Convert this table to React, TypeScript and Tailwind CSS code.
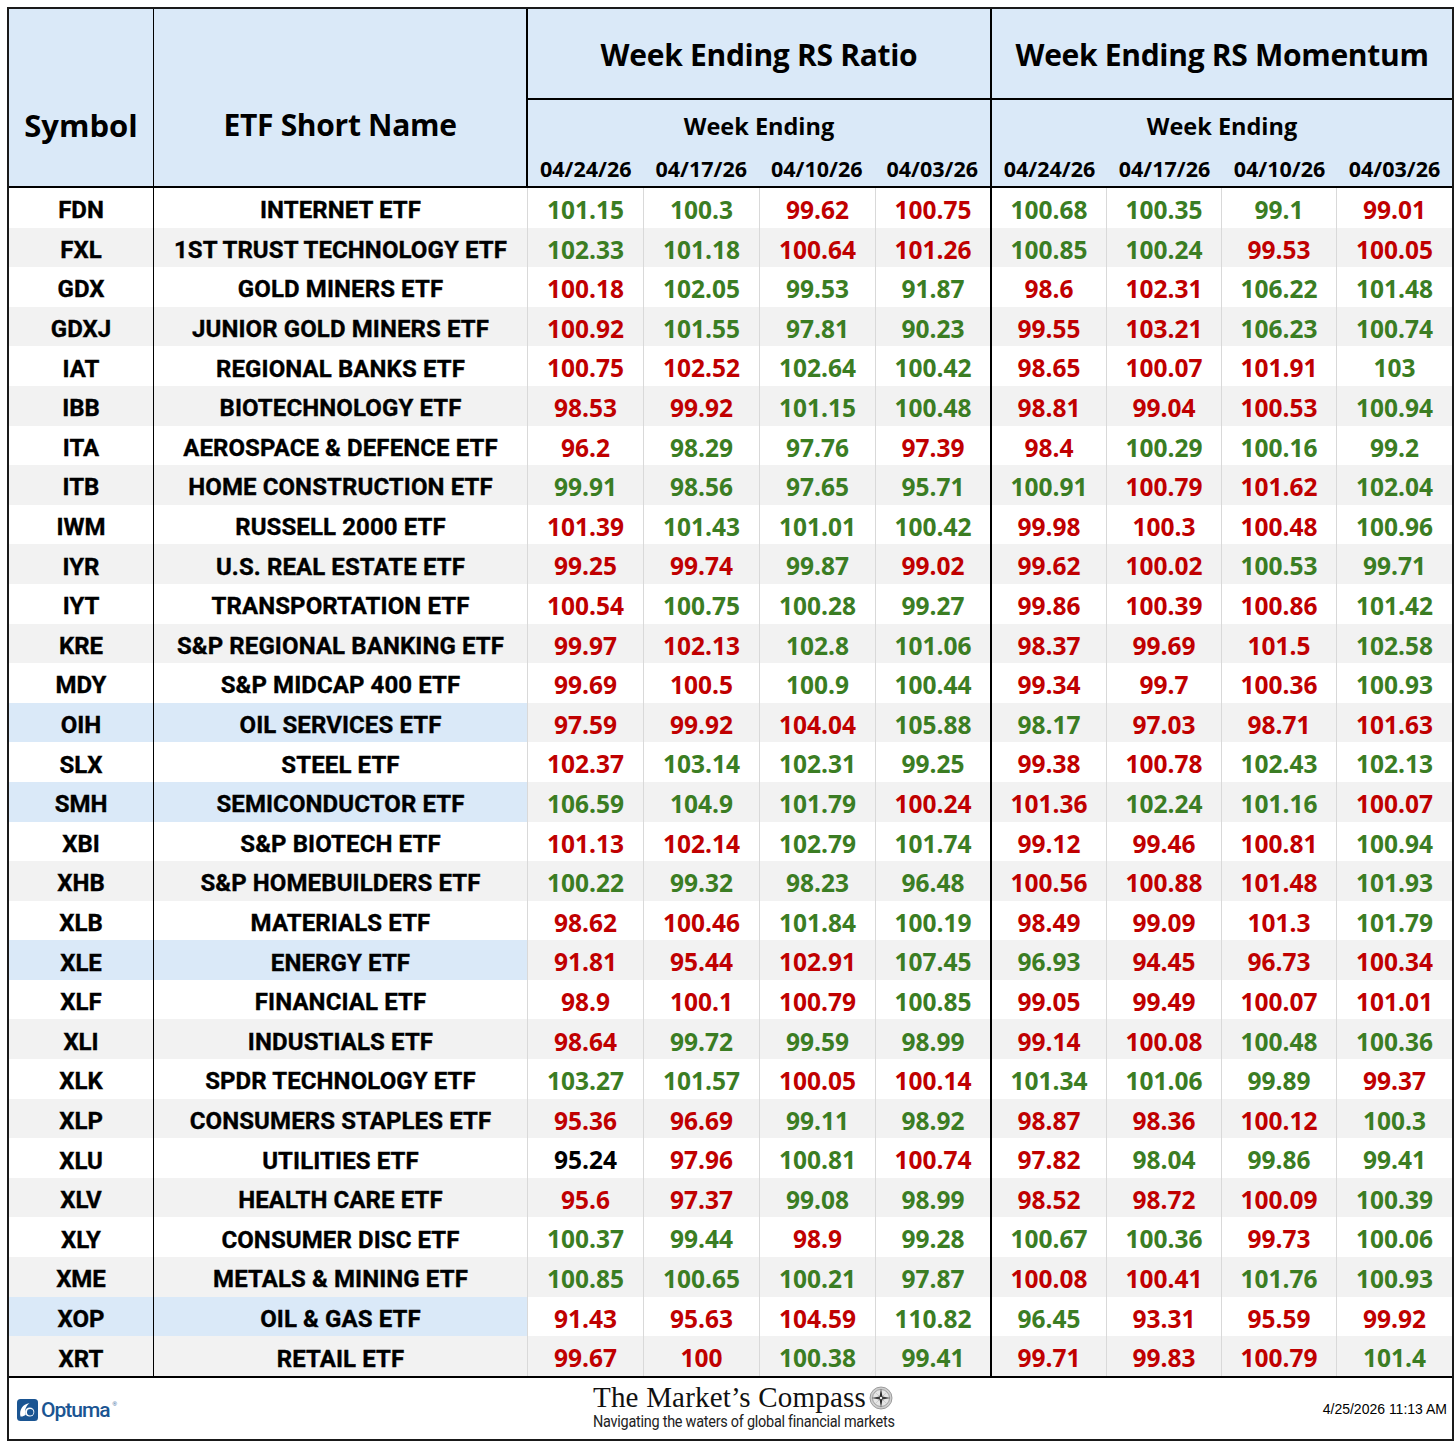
import React from "react";

type Row = [string, string, string, boolean];

const RAW: Row[] = [
  ["FDN", "INTERNET ETF", "101.15G 100.3G 99.62R 100.75R 100.68G 100.35G 99.1G 99.01R", false],
  ["FXL", "1ST TRUST TECHNOLOGY ETF", "102.33G 101.18G 100.64R 101.26R 100.85G 100.24G 99.53R 100.05R", false],
  ["GDX", "GOLD MINERS ETF", "100.18R 102.05G 99.53G 91.87G 98.6R 102.31R 106.22G 101.48G", false],
  ["GDXJ", "JUNIOR GOLD MINERS ETF", "100.92R 101.55G 97.81G 90.23G 99.55R 103.21R 106.23G 100.74G", false],
  ["IAT", "REGIONAL BANKS ETF", "100.75R 102.52R 102.64G 100.42G 98.65R 100.07R 101.91R 103G", false],
  ["IBB", "BIOTECHNOLOGY ETF", "98.53R 99.92R 101.15G 100.48G 98.81R 99.04R 100.53R 100.94G", false],
  ["ITA", "AEROSPACE & DEFENCE ETF", "96.2R 98.29G 97.76G 97.39R 98.4R 100.29G 100.16G 99.2G", false],
  ["ITB", "HOME CONSTRUCTION ETF", "99.91G 98.56G 97.65G 95.71G 100.91G 100.79R 101.62R 102.04G", false],
  ["IWM", "RUSSELL 2000 ETF", "101.39R 101.43G 101.01G 100.42G 99.98R 100.3R 100.48R 100.96G", false],
  ["IYR", "U.S. REAL ESTATE ETF", "99.25R 99.74R 99.87G 99.02R 99.62R 100.02R 100.53G 99.71G", false],
  ["IYT", "TRANSPORTATION ETF", "100.54R 100.75G 100.28G 99.27G 99.86R 100.39R 100.86R 101.42G", false],
  ["KRE", "S&P REGIONAL BANKING ETF", "99.97R 102.13R 102.8G 101.06G 98.37R 99.69R 101.5R 102.58G", false],
  ["MDY", "S&P MIDCAP 400 ETF", "99.69R 100.5R 100.9G 100.44G 99.34R 99.7R 100.36R 100.93G", false],
  ["OIH", "OIL SERVICES ETF", "97.59R 99.92R 104.04R 105.88G 98.17G 97.03R 98.71R 101.63R", true],
  ["SLX", "STEEL ETF", "102.37R 103.14G 102.31G 99.25G 99.38R 100.78R 102.43G 102.13G", false],
  ["SMH", "SEMICONDUCTOR ETF", "106.59G 104.9G 101.79G 100.24R 101.36R 102.24G 101.16G 100.07R", true],
  ["XBI", "S&P BIOTECH ETF", "101.13R 102.14R 102.79G 101.74G 99.12R 99.46R 100.81R 100.94G", false],
  ["XHB", "S&P HOMEBUILDERS ETF", "100.22G 99.32G 98.23G 96.48G 100.56R 100.88R 101.48R 101.93G", false],
  ["XLB", "MATERIALS ETF", "98.62R 100.46R 101.84G 100.19G 98.49R 99.09R 101.3R 101.79G", false],
  ["XLE", "ENERGY ETF", "91.81R 95.44R 102.91R 107.45G 96.93G 94.45R 96.73R 100.34R", true],
  ["XLF", "FINANCIAL ETF", "98.9R 100.1R 100.79R 100.85G 99.05R 99.49R 100.07R 101.01R", false],
  ["XLI", "INDUSTIALS ETF", "98.64R 99.72G 99.59G 98.99G 99.14R 100.08R 100.48G 100.36G", false],
  ["XLK", "SPDR TECHNOLOGY ETF", "103.27G 101.57G 100.05R 100.14R 101.34G 101.06G 99.89G 99.37R", false],
  ["XLP", "CONSUMERS STAPLES ETF", "95.36R 96.69R 99.11G 98.92G 98.87R 98.36R 100.12R 100.3G", false],
  ["XLU", "UTILITIES ETF", "95.24K 97.96R 100.81G 100.74R 97.82R 98.04G 99.86G 99.41G", false],
  ["XLV", "HEALTH CARE ETF", "95.6R 97.37R 99.08G 98.99G 98.52R 98.72R 100.09R 100.39G", false],
  ["XLY", "CONSUMER DISC ETF", "100.37G 99.44G 98.9R 99.28G 100.67G 100.36G 99.73R 100.06G", false],
  ["XME", "METALS & MINING ETF", "100.85G 100.65G 100.21G 97.87G 100.08R 100.41R 101.76G 100.93G", false],
  ["XOP", "OIL & GAS ETF", "91.43R 95.63R 104.59R 110.82G 96.45G 93.31R 95.59R 99.92R", true],
  ["XRT", "RETAIL ETF", "99.67R 100R 100.38G 99.41G 99.71R 99.83R 100.79R 101.4G", false],
];

const DATES = ["04/24/26", "04/17/26", "04/10/26", "04/03/26"];

function colorClass(c: string) {
  if (c === "G") return "text-[#3b7d23]";
  if (c === "R") return "text-[#c00000]";
  return "text-black";
}

function cellBorder(i: number) {
  if (i === 3) return "w-[116px] border-r-2 border-black";
  if (i < 3) return "w-[116px] border-r border-[#d9d9d9]";
  if (i === 7) return "w-[115px]";
  return "w-[115px] border-r border-[#d9d9d9]";
}

function HeaderGroup({ title, width }: { title: string; width: string }) {
  return (
    <div className={`flex flex-col ${width}`}>
      <div className="h-[91px] border-b-2 border-black flex items-center justify-center pt-[2px]">
        <span className="font-['Open_Sans',sans-serif] font-bold text-[30px] tracking-[-0.3px] text-black leading-none">
          {title}
        </span>
      </div>
      <div className="h-[42px] flex items-end justify-center pb-[4px]">
        <span className="font-['Open_Sans',sans-serif] font-bold text-[23.5px] text-black leading-none">
          Week Ending
        </span>
      </div>
      <div className="flex-1 flex items-center">
        {DATES.map((d) => (
          <div key={d} className="flex-1 flex justify-center pt-[9px]">
            <span className="font-['Open_Sans',sans-serif] font-bold text-[21.5px] text-black leading-none">
              {d}
            </span>
          </div>
        ))}
      </div>
    </div>
  );
}

function OptumaLogo() {
  return (
    <div className="flex items-center gap-[3px]">
      <svg width="21" height="22" viewBox="0 0 21 22">
        <rect x="0" y="0" width="21" height="22" rx="3.5" fill="#1b5592" />
        <path d="M3.5 17.5 C2 11 5.5 4.8 12.5 4.2 C8.8 7 7.3 11 8.8 15.8 C7 17.2 5.2 17.7 3.5 17.5 Z" fill="#ffffff" />
        <circle cx="12.7" cy="13" r="4.6" fill="#ffffff" />
        <circle cx="13.2" cy="13.3" r="3.2" fill="#1b5592" />
      </svg>
      <span className="font-['Roboto',sans-serif] font-medium text-[21px] text-[#1b5592] tracking-[-1px] leading-none">
        Optuma
      </span>
      <span className="text-[6px] text-[#1b5592] -mt-[12px] font-['Liberation_Sans',sans-serif]">®</span>
    </div>
  );
}

function Compass() {
  return (
    <svg width="24" height="24" viewBox="0 0 24 24" className="ml-[3px]">
      <circle cx="12" cy="12" r="11" fill="#cfcfcf" stroke="#8a8a8a" strokeWidth="0.8" />
      <circle cx="12" cy="12" r="8.5" fill="#e6e6e6" stroke="#7a7a7a" strokeWidth="0.6" />
      <polygon points="6,6 11.2,11 12,12 11,11.2" fill="#6a6a6a" />
      <polygon points="18,18 12.8,13 12,12 13,12.8" fill="#6a6a6a" />
      <polygon points="18,6 13,11.2 12,12 12.8,11" fill="#6a6a6a" />
      <polygon points="6,18 11,12.8 12,12 11.2,13" fill="#6a6a6a" />
      <polygon points="12,2.5 13.4,10.6 12,12 10.6,10.6" fill="#2a2a2a" />
      <polygon points="12,21.5 10.6,13.4 12,12 13.4,13.4" fill="#2a2a2a" />
      <polygon points="2.5,12 10.6,10.6 12,12 10.6,13.4" fill="#3a3a3a" />
      <polygon points="21.5,12 13.4,13.4 12,12 13.4,10.6" fill="#3a3a3a" />
      <circle cx="12" cy="12" r="1.2" fill="#f0f0f0" />
    </svg>
  );
}

export default function App() {
  return (
    <div className="w-[1456px] h-[1447px] bg-white pt-[7px] pl-[7px]">
      <div className="w-[1447px] border-2 border-[#1a1a1a] flex flex-col">
        {/* Header */}
        <div className="flex h-[179px] border-b-2 border-black bg-[#dae9f8]">
          <div className="w-[145px] border-r border-black flex items-center justify-center pt-[55px]">
            <span className="font-['Open_Sans',sans-serif] font-bold text-[31px] text-black leading-none">
              Symbol
            </span>
          </div>
          <div className="w-[374px] border-r-2 border-black flex items-center justify-center pt-[55px]">
            <span className="font-['Open_Sans',sans-serif] font-bold text-[30px] tracking-[-0.3px] text-black leading-none">
              ETF Short Name
            </span>
          </div>
          <HeaderGroup title="Week Ending RS Ratio" width="w-[464px] border-r-2 border-black" />
          <HeaderGroup title="Week Ending RS Momentum" width="w-[460px]" />
        </div>

        {/* Body */}
        <div className="flex flex-col">
          {RAW.map(([sym, name, vals, hi], idx) => {
            const rowBg = idx % 2 === 1 ? "bg-[#f2f2f2]" : "bg-white";
            const labelBg = hi ? "bg-[#dae9f8]" : rowBg;
            const cells = vals.split(" ");
            return (
              <div key={sym} className={`flex h-[39.6px] ${rowBg}`}>
                <div className={`w-[145px] border-r border-black flex items-center justify-center pt-[5px] ${labelBg}`}>
                  <span className="font-['Roboto',sans-serif] font-bold text-[24px] text-black leading-none [-webkit-text-stroke:0.35px_black]">
                    {sym}
                  </span>
                </div>
                <div className={`w-[374px] border-r border-[#d9d9d9] flex items-center justify-center pt-[5px] ${labelBg}`}>
                  <span className="font-['Roboto',sans-serif] font-bold text-[24px] text-black leading-none tracking-[0.1px] [-webkit-text-stroke:0.35px_black]">
                    {name}
                  </span>
                </div>
                {cells.map((c, i) => {
                  const v = c.slice(0, -1);
                  const col = c.slice(-1);
                  return (
                    <div key={i} className={`${cellBorder(i)} flex items-center justify-center pt-[5px]`}>
                      <span className={`font-['Open_Sans',sans-serif] font-bold text-[24.5px] leading-none ${colorClass(col)}`}>
                        {v}
                      </span>
                    </div>
                  );
                })}
              </div>
            );
          })}
        </div>

        {/* Footer */}
        <div className="flex items-center h-[63px] border-t-2 border-black bg-white">
          <div className="w-[584px] pl-[8px] flex items-center pt-[4px]">
            <OptumaLogo />
          </div>
          <div className="flex flex-col items-start pb-[2px]">
            <div className="flex items-center h-[29px]">
              <span className="font-['Liberation_Serif',serif] text-[29px] text-[#111] leading-[29px] tracking-[0.2px]">
                The Market’s Compass
              </span>
              <Compass />
            </div>
            <div className="h-[19px] flex items-center">
              <span className="font-['Roboto',sans-serif] text-[17px] text-[#222] leading-[19px] tracking-[-0.3px] scale-x-[0.85] origin-left whitespace-nowrap">
                Navigating the waters of global financial markets
              </span>
            </div>
          </div>
          <div className="flex-1 flex justify-end pr-[5px] pt-[2px]">
            <span className="font-['Liberation_Sans',sans-serif] text-[14px] text-black">
              4/25/2026 11:13 AM
            </span>
          </div>
        </div>
      </div>
    </div>
  );
}
